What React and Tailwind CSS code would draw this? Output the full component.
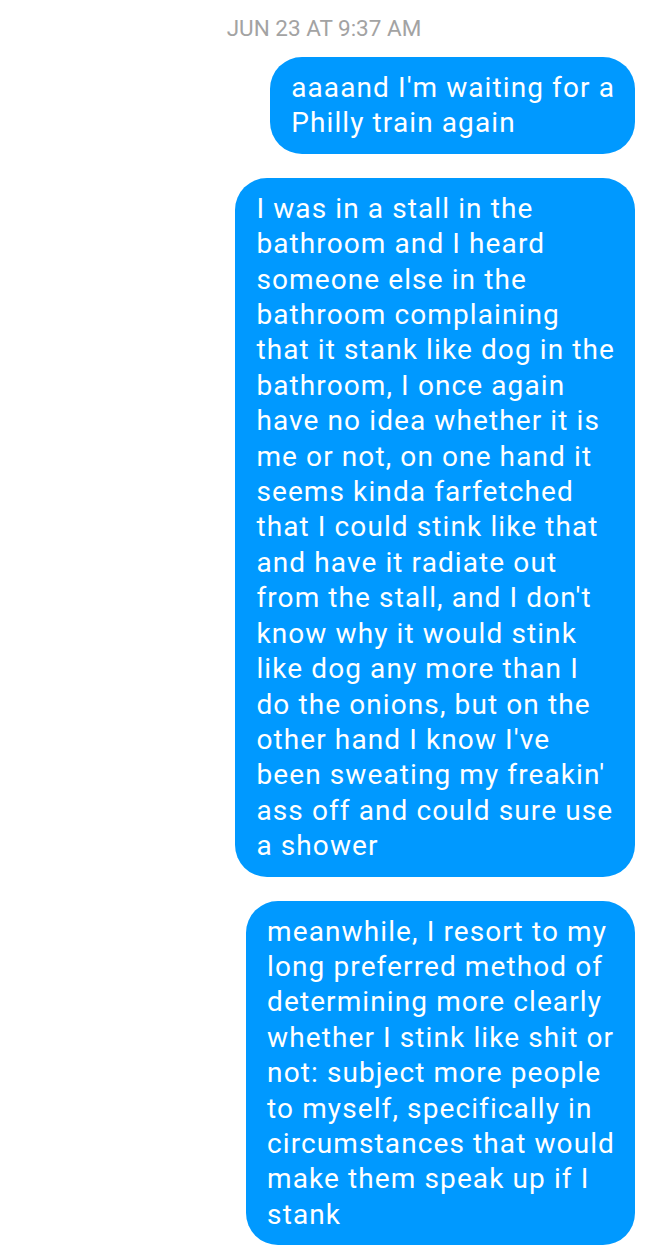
const messages = [
  {
    lines: ["aaaand I'm waiting for a", 'Philly train again'],
  },
  {
    lines: [
      'I was in a stall in the',
      'bathroom and I heard',
      'someone else in the',
      'bathroom complaining',
      'that it stank like dog in the',
      'bathroom, I once again',
      'have no idea whether it is',
      'me or not, on one hand it',
      'seems kinda farfetched',
      'that I could stink like that',
      'and have it radiate out',
      "from the stall, and I don't",
      'know why it would stink',
      'like dog any more than I',
      'do the onions, but on the',
      "other hand I know I've",
      "been sweating my freakin'",
      'ass off and could sure use',
      'a shower',
    ],
  },
  {
    lines: [
      'meanwhile, I resort to my',
      'long preferred method of',
      'determining more clearly',
      'whether I stink like shit or',
      'not: subject more people',
      'to myself, specifically in',
      'circumstances that would',
      'make them speak up if I',
      'stank',
    ],
  },
]

function Bubble({ lines }) {
  return (
    <div className="self-end rounded-[32px] bg-[#0099ff] pl-[21px] pr-[20px] py-[13px] text-white">
      {lines.map((line, i) => (
        <div key={i} className="whitespace-nowrap text-[28px] leading-[35.4px] tracking-[1.1px]">
          {line}
        </div>
      ))}
    </div>
  )
}

export default function App() {
  return (
    <div
      className="min-h-screen w-[648px] bg-white pr-[13px]"
      style={{ fontFamily: 'Roboto, "Noto Sans", sans-serif' }}
    >
      <div className="pt-[14px] pl-[13px] text-center text-[22.5px] leading-[28px] text-[#a3a3a3]">
        JUN 23 AT 9:37 AM
      </div>
      <div className="mt-[15px] flex flex-col gap-[24px]">
        {messages.map((m, i) => (
          <Bubble key={i} lines={m.lines} />
        ))}
      </div>
    </div>
  )
}
